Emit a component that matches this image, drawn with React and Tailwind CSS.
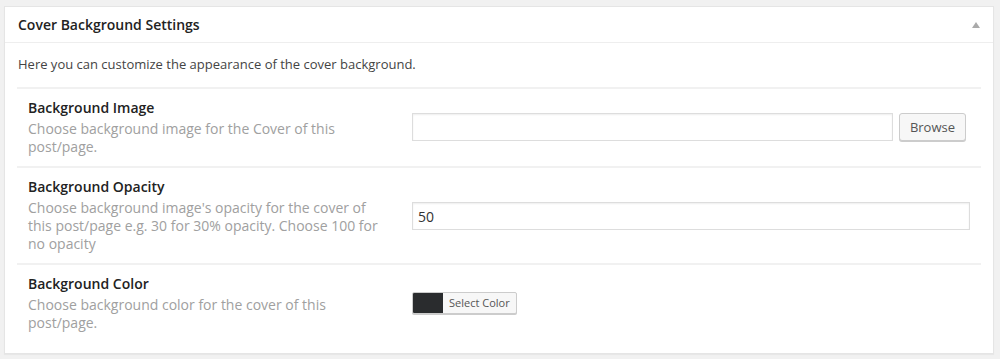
export default function App() {
  const font = { fontFamily: '"Open Sans", "Noto Sans", sans-serif' };
  return (
    <div className="min-h-[359px] w-full bg-[#f1f1f1] pt-[6px] px-[4px] pb-[6px]" style={font}>
      <div className="w-[990px] border border-[#e5e5e5] bg-white shadow-[0_1px_1px_rgba(0,0,0,0.04)]">
        <div className="flex h-[36px] items-center justify-between border-b border-[#eee] pl-[13px] pr-[13px]">
          <h3 className="text-[14px] font-semibold leading-[20px] text-[#222]">Cover Background Settings</h3>
          <svg width="8" height="6" viewBox="0 0 8 6" className="mt-[1px]">
            <polygon points="4,0 8,6 0,6" fill="#aaa" />
          </svg>
        </div>
        <div className="px-[12px] pt-[11px] pb-[11px]">
          <p className="pl-[1px] text-[13px] leading-[20px] text-[#444]">
            Here you can customize the appearance of the cover background.
          </p>
          <div className="mt-[13px]">
            <div className="flex items-center border-t-2 border-[#f1f1f1] px-[11px] pt-[9px] pb-[10px]">
              <div className="w-[384px] shrink-0">
                <div className="text-[14px] font-semibold leading-[20px] text-[#222]">Background Image</div>
                <div className="mt-[2px] max-w-[340px] text-[14px] leading-[18px] text-[#a0a0a0]">
                  Choose background image for the Cover of this post/page.
                </div>
              </div>
              <div className="flex flex-1 items-center gap-[6px] pr-[4px]">
                <div className="h-[28px] flex-1 border border-[#ddd] bg-white shadow-[inset_0_1px_2px_rgba(0,0,0,0.07)]" />
                <button className="h-[28px] rounded-[3px] border border-[#ccc] bg-[#f7f7f7] px-[10px] text-[13px] leading-[26px] text-[#555] shadow-[0_1px_0_#ccc]">
                  Browse
                </button>
              </div>
            </div>
            <div className="flex items-center border-t-2 border-[#f1f1f1] px-[11px] pt-[9px] pb-[10px]">
              <div className="w-[384px] shrink-0">
                <div className="text-[14px] font-semibold leading-[20px] text-[#222]">Background Opacity</div>
                <div className="mt-[2px] max-w-[360px] text-[14px] leading-[18px] text-[#a0a0a0]">
                  Choose background image's opacity for the cover of this post/page e.g. 30 for 30% opacity. Choose 100 for no opacity
                </div>
              </div>
              <div className="flex flex-1 pt-[2px]">
                <div className="flex h-[28px] flex-1 items-center border border-[#ddd] bg-white px-[5px] text-[14px] text-[#333] shadow-[inset_0_1px_2px_rgba(0,0,0,0.07)]">
                  50
                </div>
              </div>
            </div>
            <div className="flex items-center border-t-2 border-[#f1f1f1] px-[11px] pt-[9px] pb-[10px]">
              <div className="w-[384px] shrink-0">
                <div className="text-[14px] font-semibold leading-[20px] text-[#222]">Background Color</div>
                <div className="mt-[2px] max-w-[340px] text-[14px] leading-[18px] text-[#a0a0a0]">
                  Choose background color for the cover of this post/page.
                </div>
              </div>
              <div className="flex flex-1">
                <div className="flex h-[22px] overflow-hidden rounded-[2px] border border-[#ccc] bg-[#f7f7f7] shadow-[0_1px_0_#ccc]">
                  <div className="w-[30px] bg-[#2a2c2e]" />
                  <div className="px-[6px] text-[11px] leading-[20px] text-[#555]">Select Color</div>
                </div>
              </div>
            </div>
          </div>
        </div>
      </div>
    </div>
  );
}
